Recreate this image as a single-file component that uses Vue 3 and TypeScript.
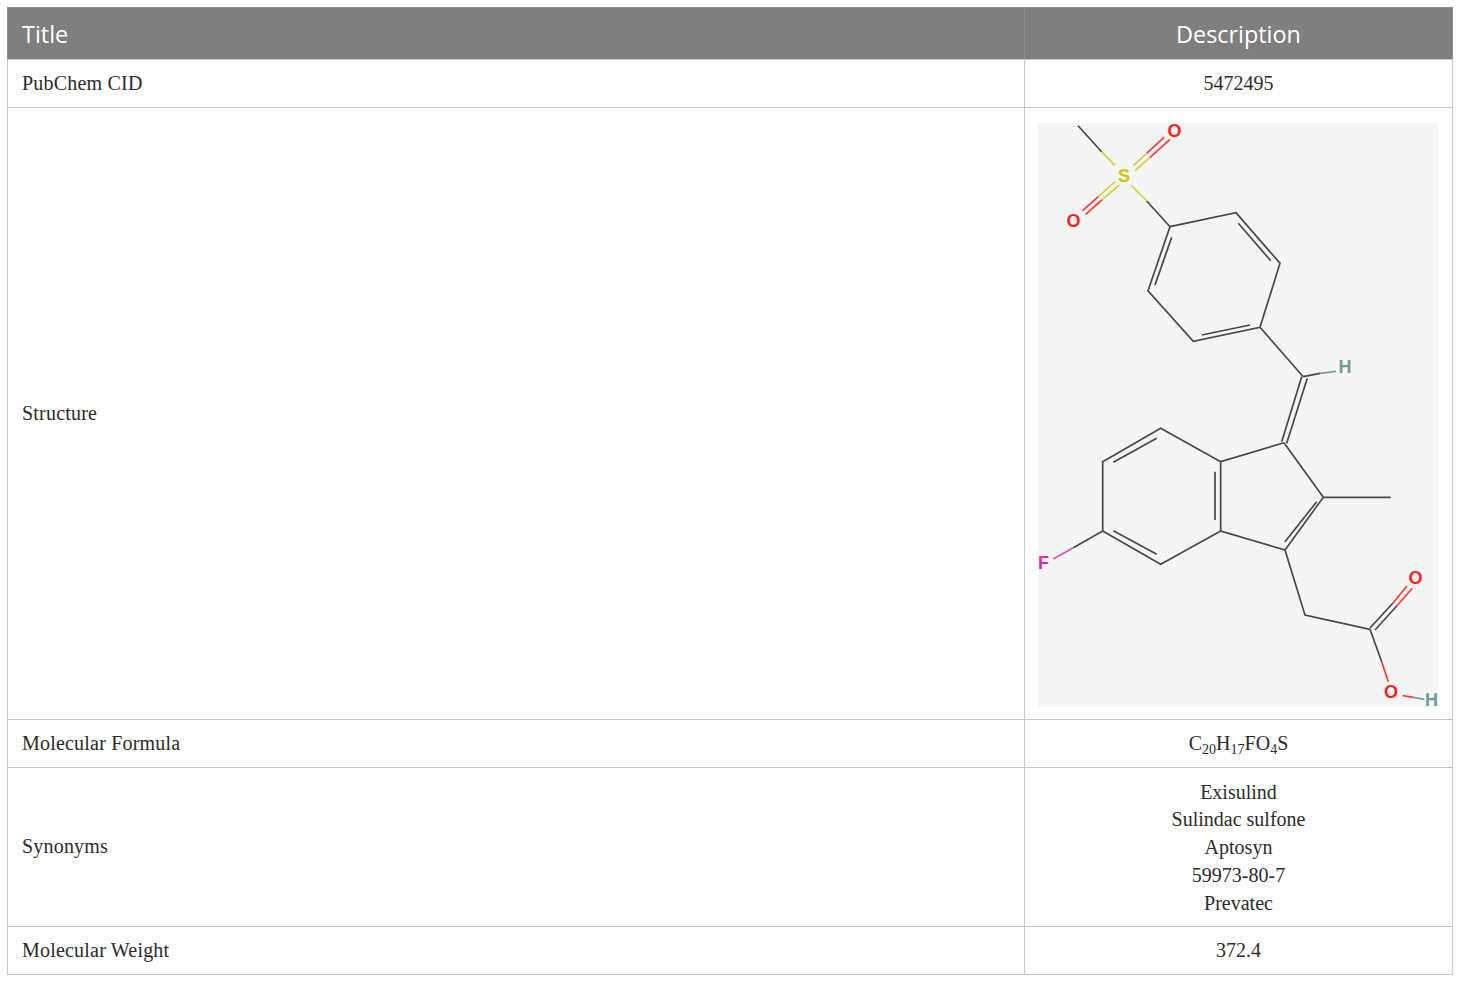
<script setup lang="ts">
type Seg = { p: string; c: string }
const D = '#484848'
const R = '#ff3a3a'
const Y = '#d2d24a'
const T = '#6f9c9a'
const K = '#dc55ac'
const segs: Seg[] = [
  { p: '1078,125.7 1101.7,151.7', c: D },
  { p: '1101.7,151.7 1115,165.7', c: Y },
  { p: '1131,185 1146.7,201', c: Y },
  { p: '1146.7,201 1170,226.7', c: D },
  { p: '1133.3,165.7 1146.7,153.3', c: Y },
  { p: '1146.7,153.3 1164,137.3', c: R },
  { p: '1135,170.7 1150,157.3', c: Y },
  { p: '1150,157.3 1170,139.3', c: R },
  { p: '1115,181.7 1098.3,196.7', c: Y },
  { p: '1098.3,196.7 1082.7,210.7', c: R },
  { p: '1119.3,185 1101.7,200', c: Y },
  { p: '1101.7,200 1085.7,214.3', c: R },
  { p: '1170,226.7 1236,212.7 1280,263.3 1260,327.3 1193.3,341.3 1148,290.7 1170,226.7', c: D },
  { p: '1171.7,237.3 1155,285', c: D },
  { p: '1238.3,223.3 1270.7,260.7', c: D },
  { p: '1250,325 1201.7,335', c: D },
  { p: '1260,327.3 1303.3,376.7', c: D },
  { p: '1303.3,376.7 1320,373.3', c: D },
  { p: '1320,373.3 1336,371.3', c: T },
  { p: '1301.7,376.7 1281.7,441.7', c: D },
  { p: '1307.3,378.3 1286.7,443.3', c: D },
  { p: '1284,442.7 1323.3,497.3 1285,550 1220.7,531 1220.7,461.7 1284,442.7', c: D },
  { p: '1323.3,497.3 1390.7,497.3', c: D },
  { p: '1220.7,461.7 1160.7,428.3 1102.7,461.7 1102.7,531 1160.7,564.3 1220.7,531', c: D },
  { p: '1215,471.7 1215,520', c: D },
  { p: '1156.7,438.3 1113.3,462.3', c: D },
  { p: '1113.3,530.7 1156.7,554.3', c: D },
  { p: '1316.7,501.7 1285,541.7', c: D },
  { p: '1102.7,531 1073.3,547.7', c: D },
  { p: '1073.3,547.7 1053.3,559', c: K },
  { p: '1285,550 1305,615 1370,629.3', c: D },
  { p: '1370,628 1393,603', c: D },
  { p: '1393,603 1407,586', c: R },
  { p: '1375,630 1396.7,606', c: D },
  { p: '1396.7,606 1412.3,588.3', c: R },
  { p: '1370,629.3 1381.7,661.7', c: D },
  { p: '1381.7,661.7 1388.3,681.7', c: R },
  { p: '1402.7,695.7 1413.3,697.3', c: R },
  { p: '1413.3,697.3 1424.3,699.3', c: T }
]
const labels = [
  { t: 'O', x: 1174.5, y: 136.5, c: '#ff1f1f' },
  { t: 'S', x: 1124, y: 181.5, c: '#c9c900' },
  { t: 'O', x: 1073.5, y: 227, c: '#ff1f1f' },
  { t: 'H', x: 1345, y: 373, c: T },
  { t: 'F', x: 1043.5, y: 569, c: '#d6339f' },
  { t: 'O', x: 1415.5, y: 584, c: '#ff1f1f' },
  { t: 'O', x: 1391, y: 697.5, c: '#ff1f1f' },
  { t: 'H', x: 1431.5, y: 706, c: T }
]
const synonyms = ['Exisulind', 'Sulindac sulfone', 'Aptosyn', '59973-80-7', 'Prevatec']
</script>

<template>
  <div class="page">
    <table class="tbl">
      <colgroup>
        <col class="c1" />
        <col class="c2" />
      </colgroup>
      <thead>
        <tr class="head">
          <th class="l">Title</th>
          <th>Description</th>
        </tr>
      </thead>
      <tbody>
        <tr class="r48">
          <td class="l">PubChem CID</td>
          <td>5472495</td>
        </tr>
        <tr>
          <td class="l">Structure</td>
          <td class="imgcell">
            <svg class="mol" viewBox="1038 123 400 584" width="400" height="584">
              <rect x="1038" y="123" width="400" height="584" fill="#f5f5f5" />
              <polyline
                v-for="(s, i) in segs"
                :key="i"
                :points="s.p"
                :stroke="s.c"
                fill="none"
                stroke-width="1.7"
              />
              <text
                v-for="(l, i) in labels"
                :key="'l' + i"
                :x="l.x"
                :y="l.y"
                :fill="l.c"
                class="atom"
                text-anchor="middle"
              >{{ l.t }}</text>
            </svg>
          </td>
        </tr>
        <tr class="r48">
          <td class="l">Molecular Formula</td>
          <td>C<sub>20</sub>H<sub>17</sub>FO<sub>4</sub>S</td>
        </tr>
        <tr>
          <td class="l">Synonyms</td>
          <td class="syn">
            <div v-for="s in synonyms" :key="s">{{ s }}</div>
          </td>
        </tr>
        <tr class="r48">
          <td class="l">Molecular Weight</td>
          <td>372.4</td>
        </tr>
      </tbody>
    </table>
  </div>
</template>

<style>
html, body { margin: 0; background: #fff; }
</style>

<style scoped>
.page {
  padding: 7px;
  width: 1445px;
  font-family: "Liberation Serif", serif;
}
.tbl {
  width: 1445px;
  table-layout: fixed;
  border-collapse: collapse;
  border: 1px solid #c6c6c6;
  color: #2b2b2b;
  font-size: 20px;
}
.c1 { width: 1017px; }
.c2 { width: 428px; }
.head th {
  height: 51px;
  padding: 0 14px;
  background: #7f7f7f;
  color: #fff;
  font-family: "Open Sans", sans-serif;
  font-size: 23.4px;
  font-weight: 400;
  text-align: center;
  border: 1px solid #8c8c8c;
  border-bottom: 1px solid #c6c6c6;
}
.head th.l { text-align: left; }
td {
  padding: 10px 14px;
  text-align: center;
  line-height: 27.8px;
  border: 1px solid #c6c6c6;
}
td.l { text-align: left; letter-spacing: 0.2px; }
.r48 td { height: 48px; padding: 1px 14px 0; box-sizing: border-box; }
.syn { padding: 10.5px 14px 8.5px; }
.imgcell { padding: 15px 14px 12px 13px; line-height: 0; }
.mol { display: block; overflow: visible; }
.atom {
  font-family: "Liberation Sans", sans-serif;
  font-size: 18px;
  font-weight: 700;
}
sub { font-size: 14px; line-height: 0; vertical-align: -4px; }
</style>
